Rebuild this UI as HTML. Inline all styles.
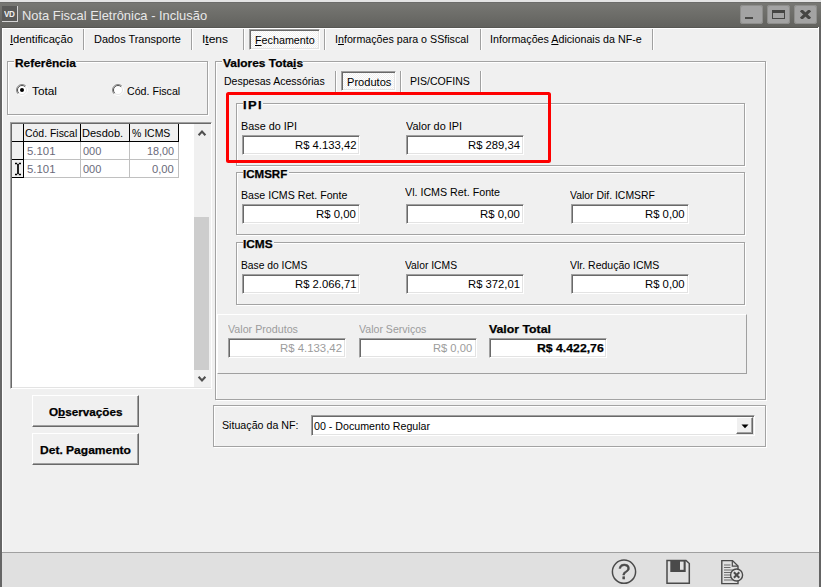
<!DOCTYPE html>
<html lang="pt-BR">
<head>
<meta charset="utf-8">
<title>Nota Fiscal Eletrônica - Inclusão</title>
<style>
*{box-sizing:border-box;margin:0;padding:0}
html,body{width:821px;height:587px;overflow:hidden;background:#f0f0f0}
body{position:relative;font-family:"Liberation Sans",Arial,sans-serif;font-size:11.5px;color:#000}
.a{position:absolute}
.t{position:absolute;line-height:16px;white-space:pre;height:16px;transform-origin:0 50%}
.t u{text-decoration:underline;text-underline-offset:1px;text-decoration-thickness:1px}
.grp{position:absolute;border:1px solid #a3a3a3;box-shadow:1px 1px 0 #fff,inset 1px 1px 0 #fff}
.mask{position:absolute;background:#f0f0f0;height:4px}
.sep{position:absolute;width:2px;border-left:1px solid #a0a0a0;background:#fff}
.inp{position:absolute;height:20px;background:#fff;border:1px solid;border-color:#a0a0a0 #fff #fff #a0a0a0;box-shadow:inset 1px 1px 0 #696969,inset -1px -1px 0 #e3e3e3}
.pressed{position:absolute;border:1px solid;border-color:#a0a0a0 #fff #fff #a0a0a0;box-shadow:inset 1px 1px 0 #696969,inset -1px -1px 0 #e3e3e3;background:repeating-conic-gradient(#fff 0 25%,#f0f0f0 0 50%) 0 0/2px 2px}
.btn{position:absolute;background:#f0f0f0;border:1px solid;border-color:#fff #696969 #696969 #fff;box-shadow:inset -1px -1px 0 #a0a0a0,inset 1px 1px 0 #f0f0f0}
.wb{position:absolute;top:5px;height:19px;width:23px;background:#a3a3a3;border-radius:3px;box-shadow:inset 0 0 0 1px #8e8e8c}
</style>
</head>
<body>
<!-- window frame -->
<div class="a" style="left:0;top:0;width:821px;height:2px;background:#e4e4e4"></div>
<div class="a" style="left:0;top:2px;width:821px;height:26px;background:linear-gradient(#6c6c6a 0,#6c6c6a 1px,#777773 1px,#62625e 25px,#575753 25px)"></div>
<div class="a" style="left:0;top:27px;width:2px;height:560px;background:#666"></div>
<div class="a" style="left:819px;top:27px;width:2px;height:560px;background:#646464"></div>
<div class="a" style="left:818px;top:27px;width:1px;height:525px;background:#fafafa"></div>
<div class="a" style="left:2px;top:28px;width:817px;height:1px;background:#fff"></div>
<div class="a" style="left:2px;top:28px;width:1px;height:524px;background:#fff"></div>
<!-- title icon -->
<div class="a" style="left:2px;top:6px;width:16px;height:16px;background:#5a5a58;border-right:1px solid #d4d4d4;border-bottom:1px solid #d4d4d4"></div>
<span class="a" style="left:4.2px;top:8.5px;font-size:9px;line-height:10px;font-weight:bold;color:#f0f0f0;letter-spacing:-0.4px;transform:scaleX(0.9);transform-origin:0 50%">VD</span>
<!-- window buttons -->
<div class="wb" style="left:740px"><div class="a" style="left:5px;top:12px;width:8px;height:2px;background:#4a4a48"></div></div>
<div class="wb" style="left:767px"><div class="a" style="left:5px;top:5px;width:13px;height:9px;border:1px solid #454543;border-top-width:3px"></div></div>
<div class="wb" style="left:794px"><svg class="a" style="left:6px;top:5px" width="11" height="9" viewBox="0 0 11 9"><path d="M1 0.3 L10 8.7 M10 0.3 L1 8.7" stroke="#454543" stroke-width="3.1" fill="none"/></svg></div>
<!-- bottom bar -->
<div class="a" style="left:2px;top:552px;width:817px;height:35px;background:#e0e0e0;border-top:1px solid #a0a0a0"></div>

<!-- main tab separators -->
<div class="sep" style="left:83px;top:29px;height:21px"></div>
<div class="sep" style="left:191px;top:29px;height:21px"></div>
<div class="sep" style="left:243px;top:29px;height:21px"></div>
<div class="sep" style="left:324px;top:29px;height:21px"></div>
<div class="sep" style="left:480px;top:29px;height:21px"></div>
<div class="sep" style="left:652px;top:29px;height:21px"></div>
<div class="pressed" style="left:249px;top:29px;width:71px;height:21px"></div>

<!-- Referência group -->
<div class="grp" style="left:7px;top:61px;width:201px;height:54px"></div>
<div class="mask" style="left:14px;top:60px;width:62px"></div>
<!-- radios -->
<svg class="a" style="left:15px;top:83px" width="14" height="14" viewBox="0 0 14 14"><circle cx="7" cy="7" r="5" fill="#fff"/><path d="M3.1 10.9 A5.5 5.5 0 0 1 10.9 3.1" stroke="#8a8a8a" stroke-width="1" fill="none"/><path d="M3.8 10.2 A4.5 4.5 0 0 1 10.2 3.8" stroke="#505050" stroke-width="1" fill="none"/><path d="M10.9 3.1 A5.5 5.5 0 0 1 3.1 10.9" stroke="#fff" stroke-width="1" fill="none"/><path d="M10.2 3.8 A4.5 4.5 0 0 1 3.8 10.2" stroke="#e6e6e6" stroke-width="1" fill="none"/><circle cx="7" cy="7" r="2" fill="#000"/></svg>
<svg class="a" style="left:110.5px;top:83px" width="14" height="14" viewBox="0 0 14 14"><circle cx="7" cy="7" r="5" fill="#fff"/><path d="M3.1 10.9 A5.5 5.5 0 0 1 10.9 3.1" stroke="#8a8a8a" stroke-width="1" fill="none"/><path d="M3.8 10.2 A4.5 4.5 0 0 1 10.2 3.8" stroke="#505050" stroke-width="1" fill="none"/><path d="M10.9 3.1 A5.5 5.5 0 0 1 3.1 10.9" stroke="#fff" stroke-width="1" fill="none"/><path d="M10.2 3.8 A4.5 4.5 0 0 1 3.8 10.2" stroke="#e6e6e6" stroke-width="1" fill="none"/></svg>

<!-- grid -->
<div class="a" style="left:10px;top:122px;width:202px;height:267px;background:#fff;border:1px solid;border-color:#a0a0a0 #fff #fff #a0a0a0;box-shadow:inset 1px 1px 0 #696969,inset -1px -1px 0 #e3e3e3"></div>
<!-- header cells -->
<div class="a" style="left:12px;top:124px;width:12px;height:18px;background:#f0f0f0;border-right:1px solid #000;border-bottom:1px solid #000"></div>
<div class="a" style="left:24px;top:124px;width:57px;height:18px;background:#f0f0f0;border-right:1px solid #000;border-bottom:1px solid #000"></div>
<div class="a" style="left:81px;top:124px;width:49px;height:18px;background:#f0f0f0;border-right:1px solid #000;border-bottom:1px solid #000"></div>
<div class="a" style="left:130px;top:124px;width:49px;height:18px;background:#f0f0f0;border-right:1px solid #000;border-bottom:1px solid #000"></div>
<!-- indicator cells -->
<div class="a" style="left:12px;top:142px;width:12px;height:18px;background:#f0f0f0;border-right:1px solid #000;border-bottom:1px solid #000"></div>
<div class="a" style="left:12px;top:160px;width:12px;height:18px;background:#f0f0f0;border-right:1px solid #000;border-bottom:1px solid #000"></div>
<!-- data cell lines -->
<div class="a" style="left:24px;top:159px;width:155px;height:1px;background:#c0c0c0"></div>
<div class="a" style="left:24px;top:177px;width:155px;height:1px;background:#c0c0c0"></div>
<div class="a" style="left:80px;top:142px;width:1px;height:36px;background:#c0c0c0"></div>
<div class="a" style="left:129px;top:142px;width:1px;height:36px;background:#c0c0c0"></div>
<div class="a" style="left:178px;top:142px;width:1px;height:36px;background:#c0c0c0"></div>
<!-- I-beam indicator -->
<svg class="a" style="left:13px;top:162px" width="10" height="14" viewBox="0 0 10 14"><path d="M2 1.5 H4.2 M5.8 1.5 H8 M2 12.5 H4.2 M5.8 12.5 H8 M5 2 V12" stroke="#000" stroke-width="1.7" fill="none"/></svg>
<!-- scrollbar -->
<div class="a" style="left:194px;top:124px;width:17px;height:263px;background:#f0f0f0"></div>
<div class="a" style="left:194px;top:217px;width:15px;height:153px;background:#cdcdcd"></div>
<svg class="a" style="left:196.5px;top:129px" width="10" height="8" viewBox="0 0 10 8"><path d="M1.6 6.2 L5 2.6 L8.4 6.2" stroke="#505050" stroke-width="2.1" fill="none"/></svg>
<svg class="a" style="left:196.5px;top:375px" width="10" height="8" viewBox="0 0 10 8"><path d="M1.6 1.8 L5 5.4 L8.4 1.8" stroke="#505050" stroke-width="2.1" fill="none"/></svg>

<!-- buttons -->
<div class="btn" style="left:32px;top:395px;width:107px;height:32px"></div>
<div class="btn" style="left:32px;top:433px;width:107px;height:32px"></div>

<!-- Valores Totais group -->
<div class="grp" style="left:215px;top:61px;width:551px;height:339px"></div>
<div class="mask" style="left:222px;top:60px;width:81px"></div>
<!-- sub tabs -->
<div class="sep" style="left:335px;top:71px;height:21px"></div>
<div class="sep" style="left:400px;top:71px;height:21px"></div>
<div class="sep" style="left:480px;top:71px;height:21px"></div>
<div class="pressed" style="left:341px;top:71px;width:55px;height:20px"></div>

<!-- IPI group -->
<div class="grp" style="left:236px;top:103px;width:509px;height:63px"></div>
<div class="mask" style="left:243px;top:102px;width:20px"></div>
<div class="inp" style="left:242px;top:135px;width:118px"></div>
<div class="inp" style="left:406px;top:135px;width:118px"></div>
<!-- ICMSRF group -->
<div class="grp" style="left:236px;top:172px;width:509px;height:63px"></div>
<div class="mask" style="left:243px;top:171px;width:46px"></div>
<div class="inp" style="left:242px;top:204px;width:118px"></div>
<div class="inp" style="left:406px;top:204px;width:118px"></div>
<div class="inp" style="left:571px;top:204px;width:118px"></div>
<!-- ICMS group -->
<div class="grp" style="left:236px;top:242px;width:509px;height:63px"></div>
<div class="mask" style="left:243px;top:241px;width:31px"></div>
<div class="inp" style="left:242px;top:274px;width:118px"></div>
<div class="inp" style="left:406px;top:274px;width:118px"></div>
<div class="inp" style="left:571px;top:274px;width:118px"></div>
<!-- totals panel -->
<div class="a" style="left:217px;top:314px;width:530px;height:60px;border:1px solid;border-color:#fff #a0a0a0 #a0a0a0 #fff"></div>
<div class="inp" style="left:228px;top:338px;width:118px"></div>
<div class="inp" style="left:359px;top:338px;width:118px"></div>
<div class="inp" style="left:489px;top:338px;width:118px"></div>

<!-- red highlight -->
<div class="a" style="left:226px;top:92px;width:325px;height:71px;border:3px solid #fe0000;border-radius:2.5px"></div>

<!-- Situação panel -->
<div class="grp" style="left:213px;top:405px;width:553px;height:42px"></div>
<div class="a" style="left:311px;top:415px;width:444px;height:21px;background:#fff;border:1px solid;border-color:#a0a0a0 #fff #fff #a0a0a0;box-shadow:inset 1px 1px 0 #696969,inset -1px -1px 0 #e3e3e3"></div>
<div class="a" style="left:736px;top:417px;width:17px;height:17px;background:#f0f0f0;border:1px solid;border-color:#fff #696969 #696969 #fff;box-shadow:inset -1px -1px 0 #a0a0a0"></div>
<svg class="a" style="left:740.6px;top:423.6px" width="8" height="5" viewBox="0 0 8 5"><path d="M0.5 0.5 H7.5 L4 4.2 Z" fill="#000"/></svg>

<!-- bottom icons -->
<svg class="a" style="left:610px;top:558px" width="28" height="28" viewBox="0 0 28 28"><circle cx="14" cy="13.7" r="11.6" fill="none" stroke="#4a4a4a" stroke-width="1.5"/></svg>
<span class="a" style="left:616px;top:560px;width:16px;text-align:center;font-size:22px;line-height:24px;color:#4a4a4a;will-change:transform;-webkit-text-stroke:0.4px">?</span>
<svg class="a" style="left:666px;top:559px" width="26" height="26" viewBox="0 0 26 26"><path d="M1 1.5 H20 L23.3 4.5 V24.3 H1 Z" fill="none" stroke="#4a4a4a" stroke-width="1.5"/><rect x="4.3" y="1.5" width="15.4" height="11.5" fill="#4a4a4a"/><rect x="14" y="2.6" width="3.6" height="8.2" fill="#e0e0e0"/></svg>
<svg class="a" style="left:720px;top:559px" width="26" height="28" viewBox="0 0 26 28"><path d="M1.8 1.6 H12.5 L18 7 V24.6 H1.8 Z" fill="none" stroke="#4a4a4a" stroke-width="1.4"/><path d="M12.3 1.6 V7.2 H18" fill="none" stroke="#4a4a4a" stroke-width="1.2"/><path d="M4 6 H10.5 M4 8.5 H10.5 M4 11 H15 M4 13.5 H15 M4 16 H15 M4 18.5 H15 M4 21 H15" stroke="#6a6a6a" stroke-width="1"/><circle cx="16.6" cy="16" r="6" fill="#e0e0e0" stroke="#4a4a4a" stroke-width="1.4"/><path d="M13.9 13.3 L19.3 18.7 M19.3 13.3 L13.9 18.7" stroke="#4a4a4a" stroke-width="2"/></svg>

<span class="t" style="left:22.15px;top:8.2px;font-size:13.5px;color:#e8e8e8;transform:scaleX(0.9562);">Nota Fiscal Eletrônica - Inclusão</span>
<span class="t" style="left:9.98px;top:31.0px;transform:scaleX(0.9746);"><u>I</u>dentificação</span>
<span class="t" style="left:93.6px;top:31.0px;transform:scaleX(0.9505);">Dados Transporte</span>
<span class="t" style="left:201.91px;top:31.0px;transform:scaleX(1.0426);">I<u>t</u>ens</span>
<span class="t" style="left:254.61px;top:32.0px;transform:scaleX(0.9353);"><u>F</u>echamento</span>
<span class="t" style="left:334.72px;top:31.0px;transform:scaleX(0.9289);">I<u>n</u>formações para o SSfiscal</span>
<span class="t" style="left:489.52px;top:31.0px;transform:scaleX(0.9309);">Informações <u>A</u>dicionais da NF-e</span>
<span class="t" style="left:14.52px;top:55.0px;font-weight:bold;-webkit-text-stroke:0.25px;transform:scaleX(1.0353);">Referência</span>
<span class="t" style="left:32.24px;top:83.0px;transform:scaleX(1.0258);">Total</span>
<span class="t" style="left:127.49px;top:83.0px;transform:scaleX(0.9253);">Cód. Fiscal</span>
<span class="t" style="left:25.25px;top:125.0px;transform:scaleX(0.9075);">Cód. Fiscal</span>
<span class="t" style="left:81.59px;top:125.0px;transform:scaleX(0.9608);">Desdob.</span>
<span class="t" style="left:132.14px;top:125.0px;transform:scaleX(0.9091);">% ICMS</span>
<span class="t" style="left:26.55px;top:143.0px;color:#6a6a7a;transform:scaleX(0.9892);">5.101</span>
<span class="t" style="left:83.32px;top:143.0px;color:#6a6a7a;transform:scaleX(0.9563);">000</span>
<span class="t" style="left:147.1px;top:143.0px;color:#6a6a7a;transform:scaleX(0.9418);">18,00</span>
<span class="t" style="left:26.55px;top:161.0px;color:#6a6a7a;transform:scaleX(0.9892);">5.101</span>
<span class="t" style="left:83.32px;top:161.0px;color:#6a6a7a;transform:scaleX(0.9563);">000</span>
<span class="t" style="left:152.36px;top:161.0px;color:#6a6a7a;transform:scaleX(0.9767);">0,00</span>
<span class="t" style="left:222.95px;top:55.0px;font-weight:bold;-webkit-text-stroke:0.25px;transform:scaleX(1.0372);">Valores Tota<u>i</u>s</span>
<span class="t" style="left:223.63px;top:73.0px;transform:scaleX(0.9162);">Despesas Acessórias</span>
<span class="t" style="left:346.58px;top:74.0px;transform:scaleX(0.9642);">Produtos</span>
<span class="t" style="left:410.13px;top:73.0px;transform:scaleX(0.9184);">PIS/COFINS</span>
<span class="t" style="left:243.36px;top:97.0px;font-weight:bold;-webkit-text-stroke:0.25px;letter-spacing:1.3px;transform:scaleX(1.1221);">IPI</span>
<span class="t" style="left:241.11px;top:118.0px;transform:scaleX(0.9399);">Base do IPI</span>
<span class="t" style="left:405.95px;top:118.0px;transform:scaleX(0.9458);">Valor do IPI</span>
<span class="t" style="left:294.57px;top:137.0px;transform:scaleX(0.9812);">R$ 4.133,42</span>
<span class="t" style="left:468.32px;top:137.0px;transform:scaleX(0.9797);">R$ 289,34</span>
<span class="t" style="left:243.25px;top:166.0px;font-weight:bold;-webkit-text-stroke:0.25px;transform:scaleX(1.0023);">ICMSRF</span>
<span class="t" style="left:241.12px;top:187.0px;transform:scaleX(0.9243);">Base ICMS Ret. Fonte</span>
<span class="t" style="left:405.45px;top:184.0px;transform:scaleX(0.9292);">Vl. ICMS Ret. Fonte</span>
<span class="t" style="left:570.45px;top:187.0px;transform:scaleX(0.9062);">Valor Dif. ICMSRF</span>
<span class="t" style="left:316.06px;top:206.0px;transform:scaleX(0.9897);">R$ 0,00</span>
<span class="t" style="left:480.06px;top:206.0px;transform:scaleX(0.9897);">R$ 0,00</span>
<span class="t" style="left:645.32px;top:206.0px;transform:scaleX(0.9833);">R$ 0,00</span>
<span class="t" style="left:243.23px;top:236.0px;font-weight:bold;-webkit-text-stroke:0.25px;transform:scaleX(1.0326);">ICMS</span>
<span class="t" style="left:241.15px;top:257.0px;transform:scaleX(0.8941);">Base do ICMS</span>
<span class="t" style="left:405.46px;top:257.0px;transform:scaleX(0.898);">Valor ICMS</span>
<span class="t" style="left:570.45px;top:257.0px;transform:scaleX(0.9131);">Vlr. Redução ICMS</span>
<span class="t" style="left:294.57px;top:276.0px;transform:scaleX(0.9812);">R$ 2.066,71</span>
<span class="t" style="left:468.07px;top:276.0px;transform:scaleX(0.9787);">R$ 372,01</span>
<span class="t" style="left:645.32px;top:276.0px;transform:scaleX(0.9833);">R$ 0,00</span>
<span class="t" style="left:227.95px;top:321.0px;color:#9c9c9c;transform:scaleX(0.9298);">Valor Produtos</span>
<span class="t" style="left:358.95px;top:321.0px;color:#9c9c9c;transform:scaleX(0.9197);">Valor Serviços</span>
<span class="t" style="left:488.95px;top:321.0px;font-weight:bold;-webkit-text-stroke:0.25px;transform:scaleX(1.0683);">Valor Total</span>
<span class="t" style="left:280.31px;top:340.0px;color:#9c9c9c;transform:scaleX(0.9894);">R$ 4.133,42</span>
<span class="t" style="left:433.33px;top:340.0px;color:#9c9c9c;transform:scaleX(0.9704);">R$ 0,00</span>
<span class="t" style="left:536.7px;top:340.0px;font-weight:bold;-webkit-text-stroke:0.25px;transform:scaleX(1.065);">R$ 4.422,76</span>
<span class="t" style="left:221.54px;top:417.0px;transform:scaleX(0.9271);">Situação da NF:</span>
<span class="t" style="left:314.08px;top:418.0px;transform:scaleX(0.9266);">00 - Documento Regular</span>
<span class="t" style="left:48.54px;top:404.0px;font-weight:bold;-webkit-text-stroke:0.25px;transform:scaleX(1.0175);">O<u>b</u>servações</span>
<span class="t" style="left:40.02px;top:442.0px;font-weight:bold;-webkit-text-stroke:0.25px;transform:scaleX(1.0461);">Det. Pa<u>g</u>amento</span>
</body>
</html>
